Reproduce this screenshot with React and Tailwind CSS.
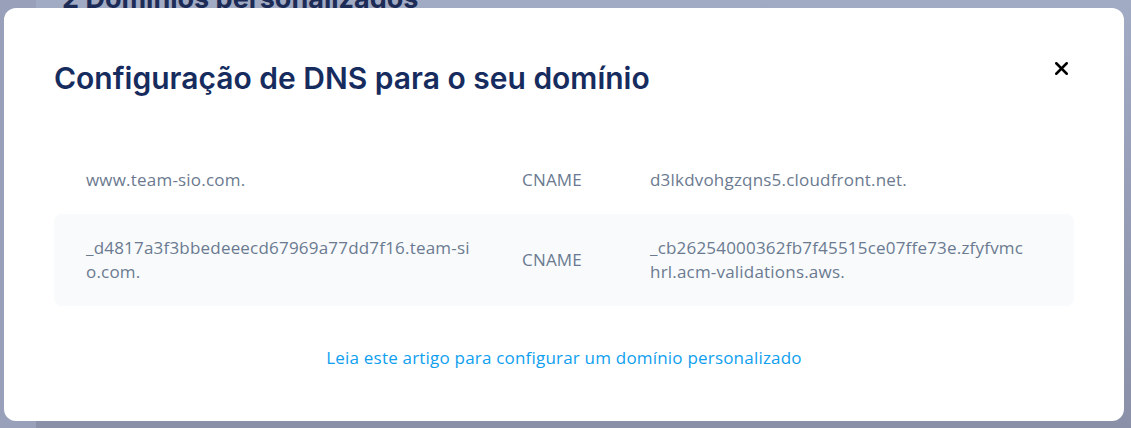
import React from "react";
import { X } from "lucide-react";

const rows = [
  { name: "www.team-sio.com.", type: "CNAME", value: "d3lkdvohgzqns5.cloudfront.net." },
  {
    name: "_d4817a3f3bbedeeecd67969a77dd7f16.team-sio.com.",
    type: "CNAME",
    value: "_cb26254000362fb7f45515ce07ffe73e.zfyfvmchrl.acm-validations.aws.",
  },
];

export default function App() {
  return (
    <div className="relative w-[1131px] h-[428px] overflow-hidden bg-gradient-to-b from-[#a1abc3] to-[#8990a8]" style={{ fontFamily: "'Open Sans', 'Noto Sans', sans-serif" }}>
      <div className="flex h-full">
        <div className="w-[36px] h-full bg-[#98a1b9]" />
        <div className="flex-1 pl-[26px]">
          <h1 className="mt-[-21px] text-[27px] font-bold text-[#1d2c57]" style={{ fontFamily: "Inter, sans-serif" }}>
            2 Domínios personalizados
          </h1>
        </div>
      </div>

      <div className="absolute left-[4px] top-[8px] w-[1120px] h-[413px] bg-white rounded-[12px] px-[50px] pt-[52px]">
        <div className="flex items-start justify-between">
          <h2 className="text-[30px] leading-[36px] font-semibold text-[#172c5e]" style={{ fontFamily: "Inter, sans-serif" }}>
            Configuração de DNS para o seu domínio
          </h2>
          <button className="mt-[-2px] mr-[2px] text-black">
            <X size={21} strokeWidth={2.9} />
          </button>
        </div>

        <div className="mt-[50px] text-[17px] leading-[24px] tracking-[0.2px] text-[#6b7a90]">
          {rows.map((r, i) => (
            <div
              key={i}
              className={`flex items-center rounded-[8px] ${i % 2 === 1 ? "bg-[#f8fafc]" : ""}`}
            >
              <div className="w-[436px] pl-[32px] pr-[18px] py-[22px] break-all">{r.name}</div>
              <div className="w-[128px] px-[32px] py-[22px]">{r.type}</div>
              <div className="flex-1 pl-[32px] pr-[44px] py-[22px] break-all">{r.value}</div>
            </div>
          ))}
        </div>

        <div className="mt-[40px] text-center text-[17px] leading-[24px] tracking-[0.2px]">
          <a className="text-[#0ea0ef]">Leia este artigo para configurar um domínio personalizado</a>
        </div>
      </div>
    </div>
  );
}
